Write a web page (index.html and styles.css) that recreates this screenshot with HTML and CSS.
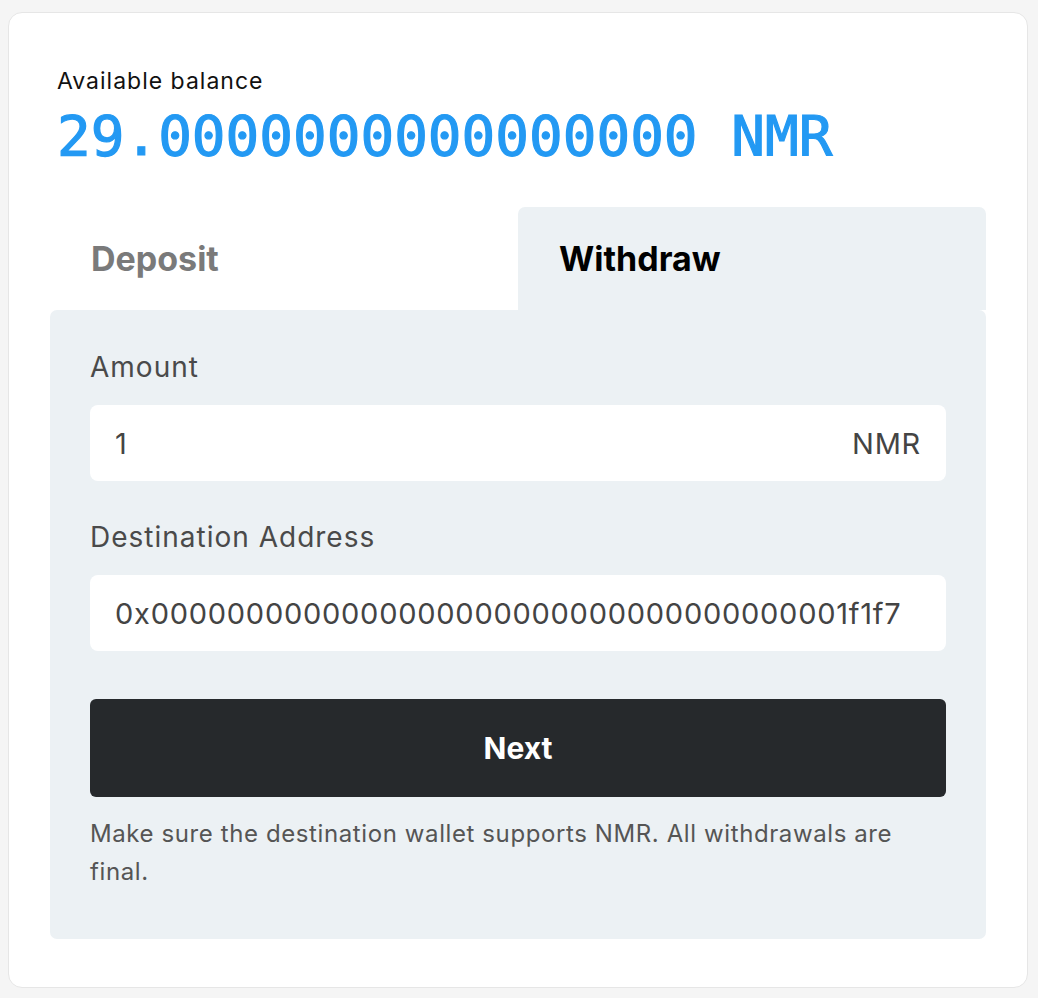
FILE: index.html
```html
<!DOCTYPE html>
<html lang="en">
<head>
<meta charset="utf-8">
<title>Wallet</title>
<link rel="stylesheet" href="styles.css">
</head>
<body>
  <div class="card">
    <div class="balance-block">
      <div class="balance-label">Available balance</div>
      <div class="balance-value">29.0000000000000000 NMR</div>
    </div>
    <div class="tabs">
      <div class="tab">Deposit</div>
      <div class="tab tab-active">Withdraw</div>
    </div>
    <div class="panel">
      <div class="field">
        <label class="field-label">Amount</label>
        <div class="input">
          <span class="input-value">1</span>
          <span class="input-suffix">NMR</span>
        </div>
      </div>
      <div class="field">
        <label class="field-label">Destination Address</label>
        <div class="input">
          <span class="input-value">0x0000000000000000000000000000000000001f1f7</span>
        </div>
      </div>
      <button class="btn-next">Next</button>
      <p class="help">Make sure the destination wallet supports NMR. All withdrawals are final.</p>
    </div>
  </div>
</body>
</html>
```
FILE: styles.css
```css
* { box-sizing: border-box; }
html, body { margin: 0; }
body {
  background: #f5f5f5;
  padding: 12px 10px 10px 8px;
  font-family: Inter, "Noto Sans", "Liberation Sans", sans-serif;
}
.card {
  background: #fff;
  border: 1px solid #e6e6e6;
  border-radius: 14px;
  padding: 54px 41px 48px 41px;
}
.balance-block { padding-left: 7px; }
.balance-label {
  font-size: 23px;
  letter-spacing: 1px;
  line-height: 28px;
  color: #111;
}
.balance-value {
  margin-top: 8px;
  font-family: "DejaVu Sans Mono", "Liberation Mono", monospace;
  font-size: 56px;
  line-height: 66px;
  color: #2399f3;
  -webkit-text-stroke: 1.2px #2399f3;
}
.tabs {
  margin-top: 38px;
  display: grid;
  grid-template-columns: 1fr 1fr;
}
.tab {
  height: 103px;
  line-height: 103px;
  padding-left: 41px;
  font-size: 34px;
  font-weight: 700;
  color: #7a7a7a;
  border-radius: 7px 7px 0 0;
}
.tab-active {
  background: #ecf1f4;
  color: #000;
}
.panel {
  background: #ecf1f4;
  border-radius: 7px;
  padding: 39px 40px 48px;
}
.field { margin-bottom: 38px; }
.field + .field { margin-bottom: 48px; }
.field-label {
  display: block;
  font-size: 28px;
  letter-spacing: 1px;
  line-height: 36px;
  color: #4a4a4a;
  margin-bottom: 20px;
}
.input {
  height: 76px;
  background: #fff;
  border-radius: 8px;
  display: flex;
  align-items: center;
  justify-content: space-between;
  padding: 0 25px;
  font-size: 29px;
  letter-spacing: 0.75px;
  color: #444;
}
.btn-next {
  display: block;
  width: 100%;
  height: 98px;
  border: 0;
  border-radius: 6px;
  background: #26292c;
  color: #fff;
  font-family: inherit;
  font-size: 30px;
  font-weight: 700;
}
.help {
  margin: 18px 0 0;
  font-size: 24px;
  letter-spacing: 0.6px;
  line-height: 38px;
  color: #555;
}
```
